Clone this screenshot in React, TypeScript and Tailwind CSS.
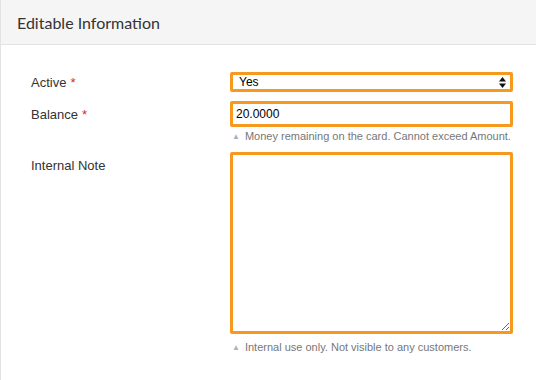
import React, { useState } from 'react';

function Help({ text, className }: { text: string; className?: string }) {
  return (
    <p className={`flex items-center gap-[5px] pl-[2px] text-[11px] leading-[15px] text-[#777] ${className ?? ''}`}>
      <span className="text-[8px] text-[#a9b4bd]">▲</span>
      {text}
    </p>
  );
}

function Label({ text, required }: { text: string; required?: boolean }) {
  return (
    <label className="text-[13px] text-[#333]">
      {text}
      {required && <span className="ml-[4px] text-[#c9302c]">*</span>}
    </label>
  );
}

function App() {
  const [active, setActive] = useState('Yes');
  const [balance, setBalance] = useState('20.0000');
  const [note, setNote] = useState('');

  return (
    <div className="h-[380px] w-[536px] bg-white font-['Liberation_Sans',Arial,sans-serif]">
      {/* en-tête */}
      <div className="h-[45px] border-b border-l border-[#e3e3e3] bg-[#f5f5f5] pl-[16px] pt-[11px] font-['Lato',sans-serif] text-[16px] text-[#333]">
        Editable Information
      </div>

      <div className="h-[335px] border-l border-[#e3e3e3] pl-[30px] pt-[25px]">
        {/* Active */}
        <div className="flex items-center">
          <div className="w-[199px] shrink-0">
            <Label text="Active" required />
          </div>
          <div className="relative w-[283px]">
            <select
              value={active}
              onChange={(e) => setActive(e.target.value)}
              className="block h-[20px] w-full appearance-none rounded-[2px] border-[3px] border-[#f7981f] bg-white pl-[6px] text-[12px] leading-[14px] text-black outline-none"
            >
              <option>Yes</option>
              <option>No</option>
            </select>
            <svg className="pointer-events-none absolute right-[7px] top-[5px]" width="7" height="11" viewBox="0 0 7 11">
              <path d="M3.5 0 L7 4.5 H0 Z" fill="#111" />
              <path d="M3.5 11 L7 6.5 H0 Z" fill="#111" />
            </svg>
          </div>
        </div>

        {/* Balance */}
        <div className="mt-[7px] flex items-start">
          <div className="w-[199px] shrink-0 pt-[1px]">
            <Label text="Balance" required />
          </div>
          <div className="w-[283px]">
            <input
              value={balance}
              onChange={(e) => setBalance(e.target.value)}
              className="block h-[26px] w-full rounded-[2px] border-[3px] border-[#f7981f] px-[3px] text-[12px] text-black outline-none"
            />
            <Help text="Money remaining on the card. Cannot exceed Amount." className="mt-[2px]" />
          </div>
        </div>

        {/* Internal Note */}
        <div className="mt-[8px] flex items-start">
          <div className="w-[199px] shrink-0 pt-[1px]">
            <Label text="Internal Note" />
          </div>
          <div className="w-[283px]">
            <textarea
              value={note}
              onChange={(e) => setNote(e.target.value)}
              className="block h-[182px] w-full rounded-[2px] border-[3px] border-[#f7981f] px-[3px] text-[12px] outline-none"
            />
            <Help text="Internal use only. Not visible to any customers." className="mt-[6px]" />
          </div>
        </div>
      </div>
    </div>
  );
}

export default App;
